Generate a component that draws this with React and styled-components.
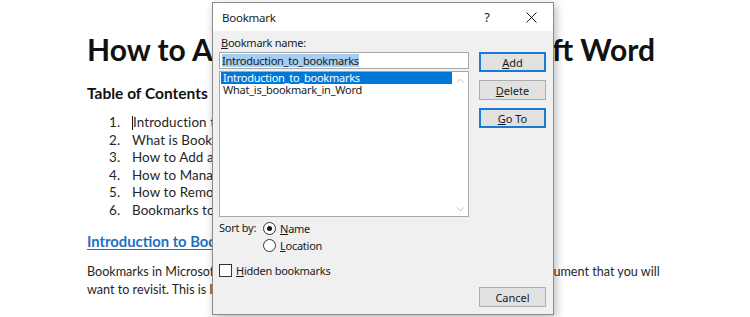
import React from "react";
import styled, { createGlobalStyle } from "styled-components";

const GlobalStyle = createGlobalStyle`
  html, body {
    margin: 0;
    padding: 0;
    background: #ffffff;
  }
`;

const Page = styled.div`
  position: relative;
  width: 750px;
  height: 317px;
  overflow: hidden;
  background: #ffffff;
`;

/* ---------- the Word document behind the dialog ---------- */

const Doc = styled.div`
  display: flex;
  flex-direction: column;
  padding: 31px 0 0 87px;
  font-family: Lato, "Liberation Sans", sans-serif;
  color: #262626;
  white-space: nowrap;
`;

const Title = styled.h1`
  margin: 0;
  font-size: 30px;
  line-height: 36px;
  font-weight: 700;
  color: #111;
`;

const Subtitle = styled.h2`
  margin: 16px 0 0;
  font-size: 15.5px;
  line-height: 20px;
  font-weight: 700;
  color: #111;
`;

const List = styled.ol`
  margin: 11px 0 0;
  padding: 0 0 0 22px;
  list-style: none;
  display: flex;
  flex-direction: column;
`;

const Item = styled.li`
  display: flex;
  font-size: 13.4px;
  line-height: 17.6px;
  letter-spacing: 0.1px;
`;

const Num = styled.span`
  width: 23px;
`;

const Caret = styled.span`
  display: inline-block;
  width: 1px;
  height: 14px;
  align-self: center;
  background: #111;
`;

const SectionHead = styled.h3`
  margin: 11px 0 0;
  font-size: 14.8px;
  line-height: 20px;
  font-weight: 700;
  color: #1f6fc5;
  text-decoration: underline;
  text-underline-offset: 2px;
`;

const Para = styled.p`
  margin: 12px 0 0;
  font-size: 12.6px;
  line-height: 18px;
  color: #262626;
`;

/* ---------- the Bookmark dialog ---------- */

const Dialog = styled.div`
  position: absolute;
  left: 212px;
  top: 2px;
  width: 340px;
  height: 311px;
  display: flex;
  flex-direction: column;
  background: #f0f0f0;
  border: 1px solid #8c8c8c;
  box-shadow: 2px 3px 9px rgba(0, 0, 0, 0.28);
  font-family: "Noto Sans", "Open Sans", sans-serif;
  font-size: 11px;
  letter-spacing: -0.25px;
  color: #1a1a1a;
`;

const TitleBar = styled.div`
  height: 28px;
  display: flex;
  align-items: center;
  padding-left: 9px;
  background: #ffffff;
`;

const TitleText = styled.span`
  flex: 1;
  font-size: 11.5px;
`;

const TitleButton = styled.span`
  width: 44px;
  display: flex;
  justify-content: center;
  align-items: center;
  font-size: 13px;
`;

const Body = styled.div`
  flex: 1;
  display: flex;
  gap: 10px;
  padding: 5px 7px 7px 6px;
`;

const LeftCol = styled.div`
  width: 250px;
  display: flex;
  flex-direction: column;
`;

const RightCol = styled.div`
  flex: 1;
  display: flex;
  flex-direction: column;
  gap: 8px;
  padding-top: 16px;
`;

const Label = styled.div`
  height: 14px;
  line-height: 14px;
  padding-left: 2px;
  margin-bottom: 2px;
`;

const Key = styled.span`
  text-decoration: underline;
  text-underline-offset: 1px;
`;

const Input = styled.div`
  height: 15px;
  display: flex;
  align-items: center;
  padding: 0 2px;
  background: #ffffff;
  border: 1px solid #a8a8a8;
`;

const Selected = styled.span`
  background: #a6cdf2;
  line-height: 13px;
`;

const ListBox = styled.div`
  margin-top: 2px;
  height: 144px;
  display: flex;
  background: #ffffff;
  border: 1px solid #a8a8a8;
`;

const Options = styled.div`
  flex: 1;
  padding: 0 0 0 1px;
`;

const Option = styled.div`
  height: 12px;
  line-height: 12px;
  padding-left: 2px;
  background: ${(p) => (p.$active ? "#0078d7" : "transparent")};
  color: ${(p) => (p.$active ? "#ffffff" : "#1a1a1a")};
`;

const ScrollBar = styled.div`
  width: 16px;
  display: flex;
  flex-direction: column;
  justify-content: space-between;
  align-items: center;
  padding: 6px 0 4px;
`;

const SortRow = styled.div`
  display: flex;
  margin-top: 4px;
`;

const SortLabel = styled.span`
  width: 44px;
  line-height: 14px;
`;

const Radios = styled.div`
  display: flex;
  flex-direction: column;
  gap: 3px;
`;

const Choice = styled.div`
  display: flex;
  align-items: center;
  gap: 4px;
  height: 14px;
`;

const Radio = styled.span`
  width: 11px;
  height: 11px;
  border-radius: 50%;
  border: 1px solid #333;
  background: #fff;
  display: flex;
  align-items: center;
  justify-content: center;
  &::after {
    content: "";
    width: 5px;
    height: 5px;
    border-radius: 50%;
    background: ${(p) => (p.$on ? "#1a1a1a" : "transparent")};
  }
`;

const CheckRow = styled.div`
  display: flex;
  align-items: center;
  gap: 4px;
  margin-top: 11px;
  height: 14px;
`;

const Check = styled.span`
  width: 11px;
  height: 11px;
  border: 1px solid #333;
  background: #fff;
`;

const Button = styled.div`
  height: ${(p) => (p.$default ? "16px" : "18px")};
  display: flex;
  align-items: center;
  justify-content: center;
  background: #e1e1e1;
  border: ${(p) => (p.$default ? "2px solid #1a7ad4" : "1px solid #adadad")};
  letter-spacing: 0;
`;

const CancelButton = styled(Button)`
  margin-top: auto;
`;

function Chevron({ up }) {
  return (
    <svg width="7" height="5" viewBox="0 0 7 5">
      <path
        d={up ? "M0.5 4.5 L3.5 1 L6.5 4.5" : "M0.5 0.5 L3.5 4 L6.5 0.5"}
        fill="none"
        stroke="#c2c2c2"
        strokeWidth="1"
      />
    </svg>
  );
}

function CloseIcon() {
  return (
    <svg width="11" height="11" viewBox="0 0 11 11">
      <path d="M0.5 0.5 L10.5 10.5 M10.5 0.5 L0.5 10.5" stroke="#1a1a1a" strokeWidth="1" />
    </svg>
  );
}

const toc = [
  "Introduction to Bookmarks",
  "What is Bookmark in Word",
  "How to Add a Bookmark",
  "How to Manage Bookmarks",
  "How to Remove Bookmarks",
  "Bookmarks to the Rescue",
];

export default function App() {
  return (
    <Page>
      <GlobalStyle />
      <Doc>
        <Title>How to Add Bookmarks in Microsoft Word</Title>
        <Subtitle>Table of Contents</Subtitle>
        <List>
          {toc.map((t, i) => (
            <Item key={t}>
              <Num>{i + 1}.</Num>
              {i === 0 && <Caret />}
              {t}
            </Item>
          ))}
        </List>
        <SectionHead>Introduction to Bookmarks</SectionHead>
        <Para>
          Bookmarks in Microsoft Word let you mark a specific place, or a section in a long document that you will
          <br />
          want to revisit. This is like a real bookmark in a book.
        </Para>
      </Doc>

      <Dialog>
        <TitleBar>
          <TitleText>Bookmark</TitleText>
          <TitleButton>?</TitleButton>
          <TitleButton>
            <CloseIcon />
          </TitleButton>
        </TitleBar>
        <Body>
          <LeftCol>
            <Label>
              <Key>B</Key>ookmark name:
            </Label>
            <Input>
              <Selected>Introduction_to_bookmarks</Selected>
            </Input>
            <ListBox>
              <Options>
                <Option $active>Introduction_to_bookmarks</Option>
                <Option>What_is_bookmark_in_Word</Option>
              </Options>
              <ScrollBar>
                <Chevron up />
                <Chevron />
              </ScrollBar>
            </ListBox>
            <SortRow>
              <SortLabel>Sort by:</SortLabel>
              <Radios>
                <Choice>
                  <Radio $on />
                  <span>
                    <Key>N</Key>ame
                  </span>
                </Choice>
                <Choice>
                  <Radio />
                  <span>
                    <Key>L</Key>ocation
                  </span>
                </Choice>
              </Radios>
            </SortRow>
            <CheckRow>
              <Check />
              <span>
                <Key>H</Key>idden bookmarks
              </span>
            </CheckRow>
          </LeftCol>
          <RightCol>
            <Button $default>
              <span>
                <Key>A</Key>dd
              </span>
            </Button>
            <Button>
              <span>
                <Key>D</Key>elete
              </span>
            </Button>
            <Button $default>
              <span>
                <Key>G</Key>o To
              </span>
            </Button>
            <CancelButton>Cancel</CancelButton>
          </RightCol>
        </Body>
      </Dialog>
    </Page>
  );
}
